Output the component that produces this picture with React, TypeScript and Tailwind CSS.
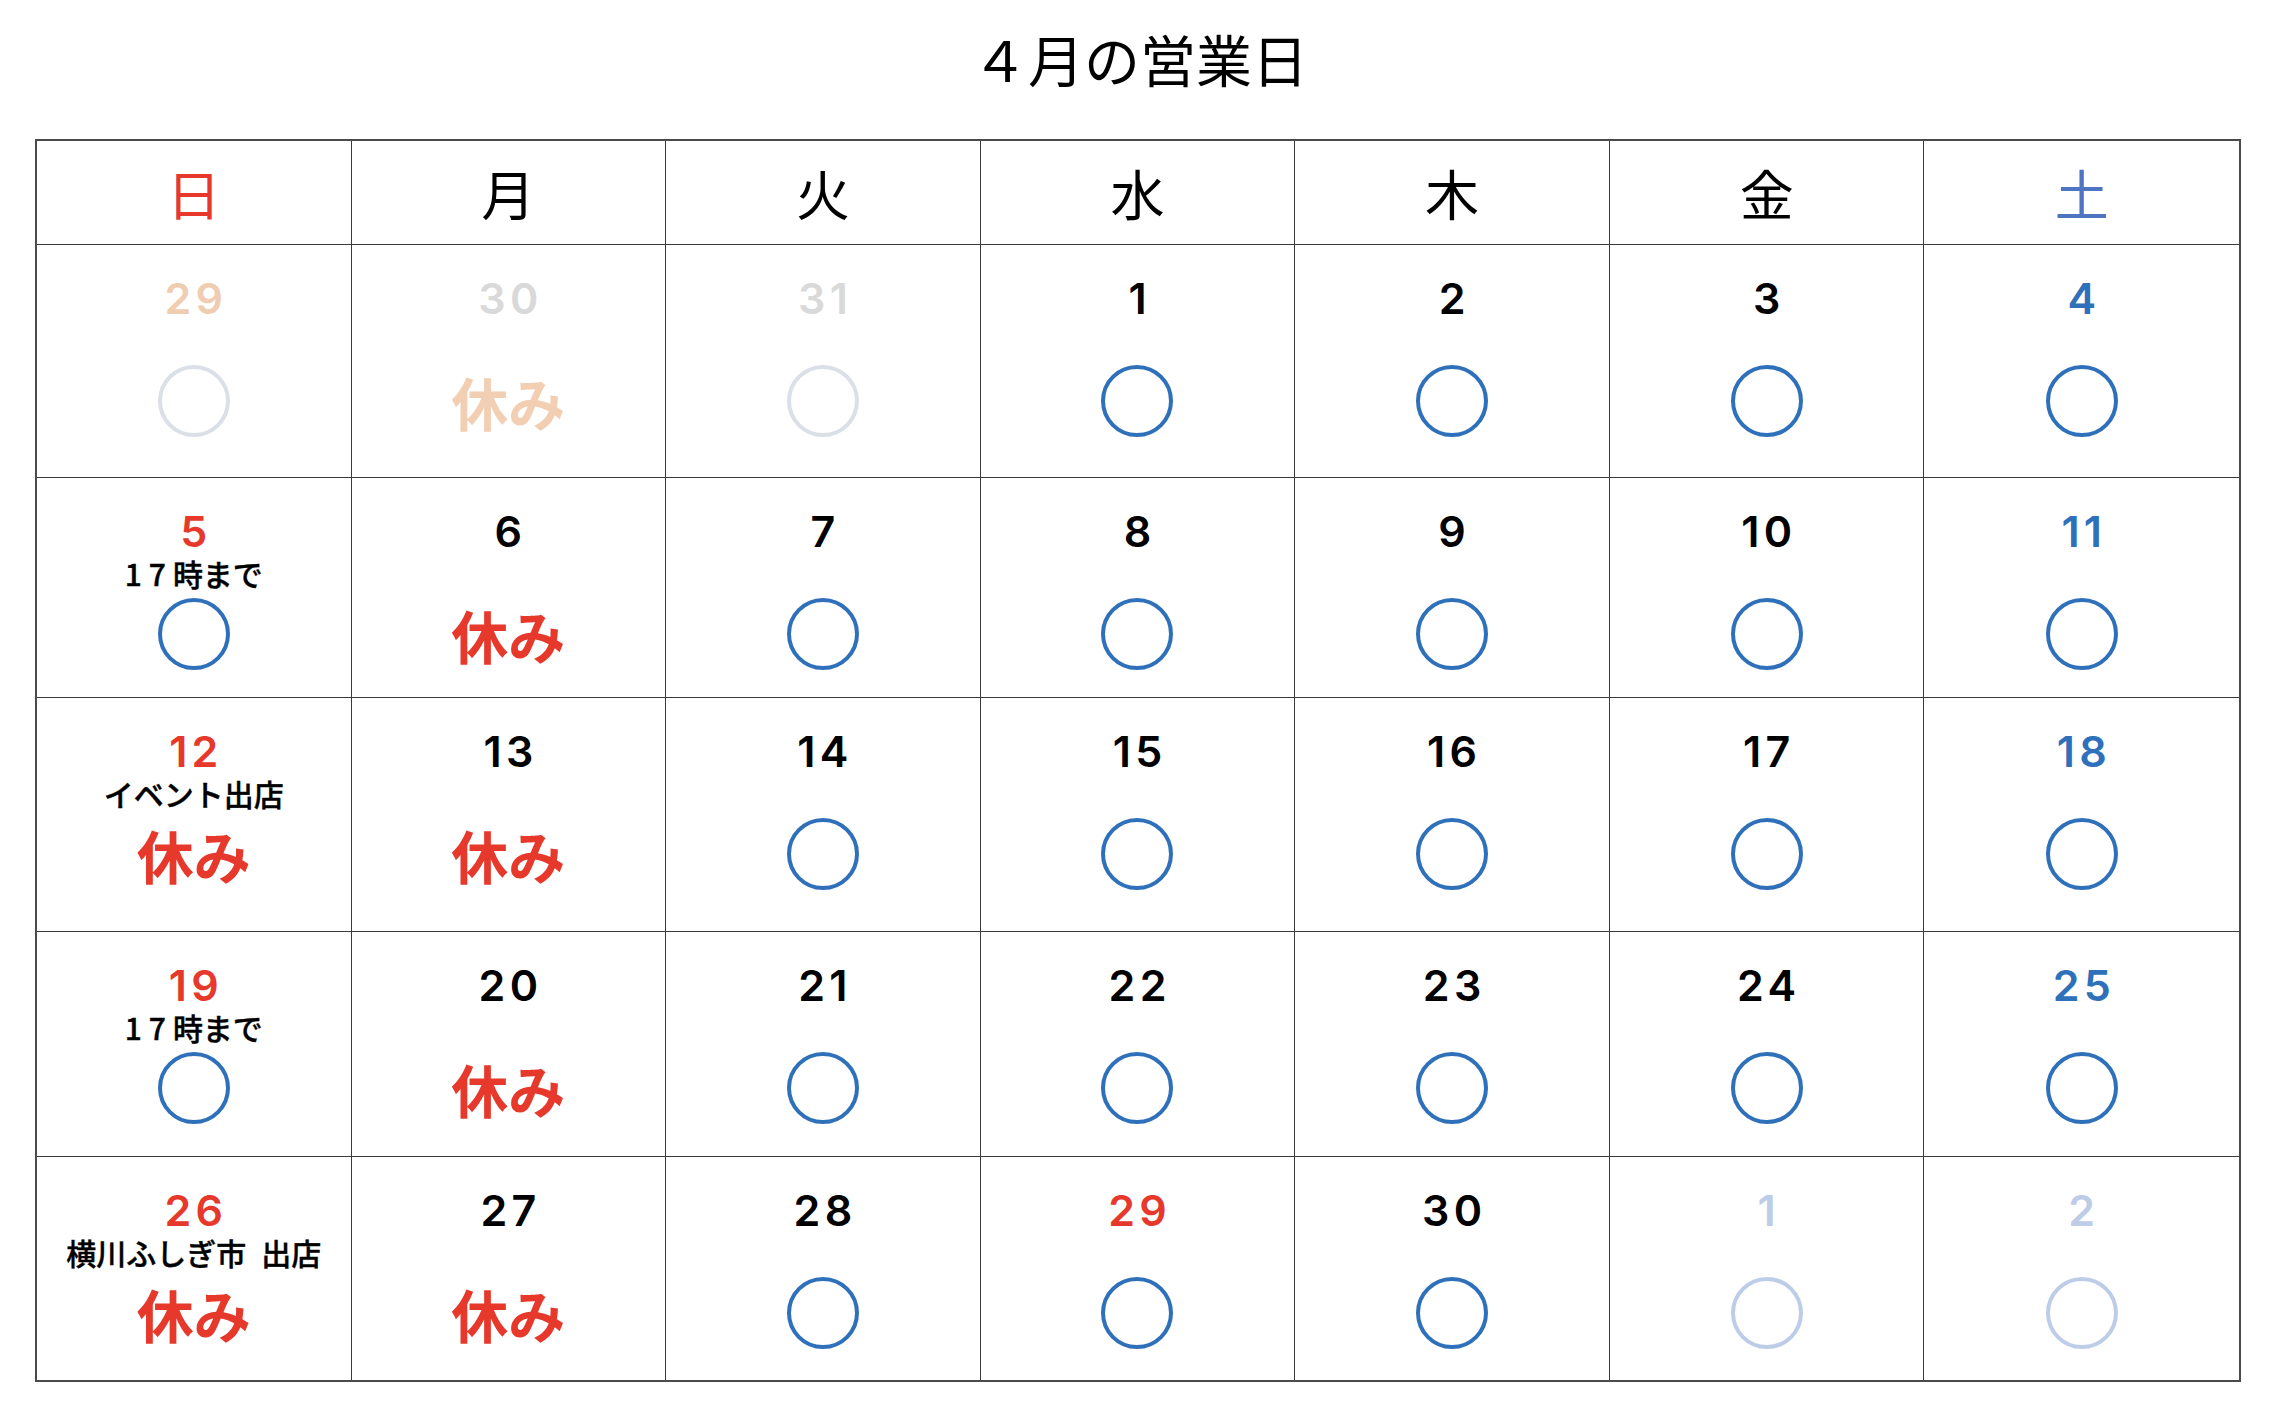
import React from "react";

type Mark = "circle" | "rest";
type Cell = {
  n: string;
  numColor: string;
  note?: React.ReactNode;
  mark: Mark;
  markColor: string;
};

const RED = "text-[#e6392b]";
const BLACK = "text-black";
const BLUE = "text-[#2f70bb]";

const C_BLUE = "border-[#2f70bb]";
const C_FADE = "border-[#dadfe8]";
const C_MAY = "border-[#bdcde8]";

const seventeen = (
  <>
    <span className="tracking-[7px]">17</span>時まで
  </>
);

const rows: Cell[][] = [
  [
    { n: "29", numColor: "text-[#f0ccb0]", mark: "circle", markColor: C_FADE },
    { n: "30", numColor: "text-[#d9d9d9]", mark: "rest", markColor: "text-[#f2ceb2]" },
    { n: "31", numColor: "text-[#d9d9d9]", mark: "circle", markColor: C_FADE },
    { n: "1", numColor: BLACK, mark: "circle", markColor: C_BLUE },
    { n: "2", numColor: BLACK, mark: "circle", markColor: C_BLUE },
    { n: "3", numColor: BLACK, mark: "circle", markColor: C_BLUE },
    { n: "4", numColor: BLUE, mark: "circle", markColor: C_BLUE },
  ],
  [
    { n: "5", numColor: RED, note: seventeen, mark: "circle", markColor: C_BLUE },
    { n: "6", numColor: BLACK, mark: "rest", markColor: RED },
    { n: "7", numColor: BLACK, mark: "circle", markColor: C_BLUE },
    { n: "8", numColor: BLACK, mark: "circle", markColor: C_BLUE },
    { n: "9", numColor: BLACK, mark: "circle", markColor: C_BLUE },
    { n: "10", numColor: BLACK, mark: "circle", markColor: C_BLUE },
    { n: "11", numColor: BLUE, mark: "circle", markColor: C_BLUE },
  ],
  [
    { n: "12", numColor: RED, note: "イベント出店", mark: "rest", markColor: RED },
    { n: "13", numColor: BLACK, mark: "rest", markColor: RED },
    { n: "14", numColor: BLACK, mark: "circle", markColor: C_BLUE },
    { n: "15", numColor: BLACK, mark: "circle", markColor: C_BLUE },
    { n: "16", numColor: BLACK, mark: "circle", markColor: C_BLUE },
    { n: "17", numColor: BLACK, mark: "circle", markColor: C_BLUE },
    { n: "18", numColor: BLUE, mark: "circle", markColor: C_BLUE },
  ],
  [
    { n: "19", numColor: RED, note: seventeen, mark: "circle", markColor: C_BLUE },
    { n: "20", numColor: BLACK, mark: "rest", markColor: RED },
    { n: "21", numColor: BLACK, mark: "circle", markColor: C_BLUE },
    { n: "22", numColor: BLACK, mark: "circle", markColor: C_BLUE },
    { n: "23", numColor: BLACK, mark: "circle", markColor: C_BLUE },
    { n: "24", numColor: BLACK, mark: "circle", markColor: C_BLUE },
    { n: "25", numColor: BLUE, mark: "circle", markColor: C_BLUE },
  ],
  [
    { n: "26", numColor: RED, note: "横川ふしぎ市\u2002出店", mark: "rest", markColor: RED },
    { n: "27", numColor: BLACK, mark: "rest", markColor: RED },
    { n: "28", numColor: BLACK, mark: "circle", markColor: C_BLUE },
    { n: "29", numColor: RED, mark: "circle", markColor: C_BLUE },
    { n: "30", numColor: BLACK, mark: "circle", markColor: C_BLUE },
    { n: "1", numColor: "text-[#bdcde8]", mark: "circle", markColor: C_MAY },
    { n: "2", numColor: "text-[#bdcde8]", mark: "circle", markColor: C_MAY },
  ],
];

const days = [
  { t: "日", c: "text-[#e6392b]" },
  { t: "月", c: "text-black" },
  { t: "火", c: "text-black" },
  { t: "水", c: "text-black" },
  { t: "木", c: "text-black" },
  { t: "金", c: "text-black" },
  { t: "土", c: "text-[#4d75c1]" },
];

const JP = "[font-family:'Noto_Sans_CJK_JP',sans-serif]";

function DayCell({ cell, lastCol, lastRow }: { cell: Cell; lastCol: boolean; lastRow: boolean }) {
  return (
    <div
      className={`flex flex-col items-center pt-[31px] ${lastCol ? "" : "border-r"} ${
        lastRow ? "" : "border-b"
      } border-[#3a3a3a]`}
    >
      <div
        className={`flex h-[44px] items-center justify-center font-['Inter',sans-serif] text-[43px] font-semibold leading-none tracking-[0.1em] pl-[0.1em] ${cell.numColor}`}
      >
        {cell.n}
      </div>
      <div
        className={`flex h-[40px] items-center justify-center ${JP} text-[30px] font-medium leading-none text-black whitespace-nowrap [-webkit-text-stroke:0.4px_black]`}
      >
        {cell.note ?? ""}
      </div>
      <div className="flex h-[82px] items-center justify-center">
        {cell.mark === "circle" ? (
          <div className={`h-[72px] w-[72px] rounded-full border-[4.5px] ${cell.markColor}`} />
        ) : (
          <div className={`${JP} text-[57px] font-bold leading-none ${cell.markColor}`}>休み</div>
        )}
      </div>
    </div>
  );
}

export default function App() {
  return (
    <div className={`min-h-[1420px] w-[2280px] bg-white ${JP}`}>
      <div className="flex h-[115px] items-center justify-center text-[56px] leading-none text-black">
        ４月の営業日
      </div>
      <div className="mt-[24px] ml-[35px] w-[2206px]">
        <div className="grid grid-cols-7 grid-rows-[104px_233px_220px_234px_225px_223px] border-2 border-[#4a4a4a]">
          {days.map((d, i) => (
            <div
              key={d.t}
              className={`flex items-center justify-center border-b ${i < 6 ? "border-r" : ""} border-[#3a3a3a] text-[54px] leading-none ${d.c}`}
            >
              {d.t}
            </div>
          ))}
          {rows.map((row, ri) =>
            row.map((cell, ci) => (
              <DayCell key={`${ri}-${ci}`} cell={cell} lastCol={ci === 6} lastRow={ri === rows.length - 1} />
            ))
          )}
        </div>
      </div>
    </div>
  );
}
